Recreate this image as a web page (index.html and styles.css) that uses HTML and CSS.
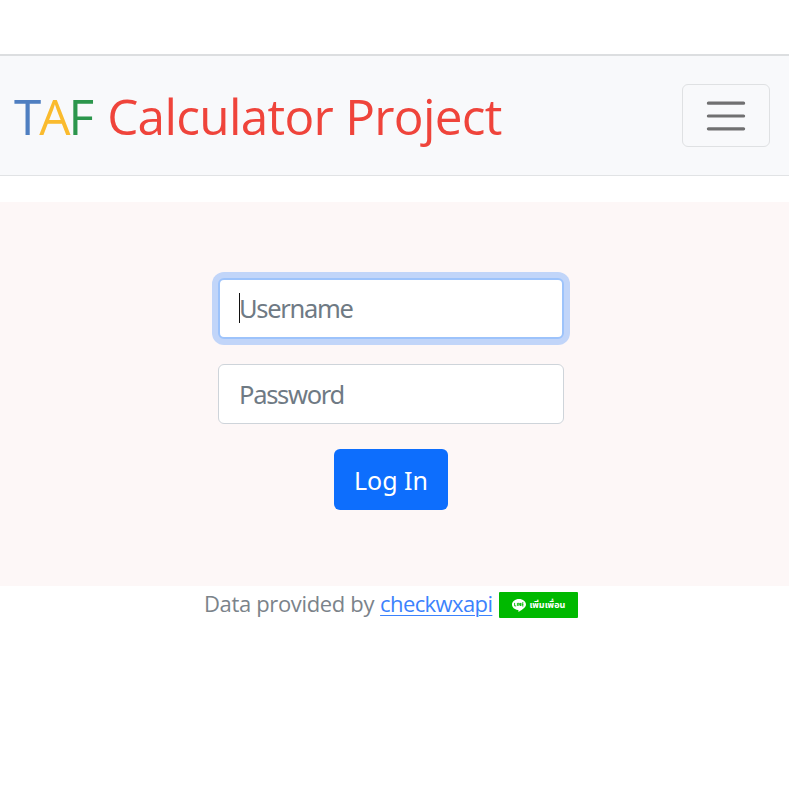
FILE: index.html
```html
<!DOCTYPE html>
<html lang="en">
<head>
<meta charset="utf-8">
<title>TAF Calculator Project</title>
<link rel="stylesheet" href="styles.css">
</head>
<body>
<div class="page">
  <header class="navbar">
    <a class="brand"><span class="initials"><span class="blue">T</span><span class="yellow">A</span><span class="green">F</span></span>Calculator Project</a>
    <button class="toggler" type="button" aria-label="Menu">
      <svg width="48" height="48" viewBox="0 0 30 30"><path stroke="#000" stroke-opacity=".55" stroke-linecap="round" stroke-width="2" d="M4 7h22M4 15h22M4 23h22"/></svg>
    </button>
  </header>
  <main class="login">
    <form class="form">
      <div class="field focused"><input type="text" placeholder="Username"><span class="caret"></span></div>
      <div class="field"><input class="password" type="password" placeholder="Password"></div>
      <button class="submit" type="button"><span>Log In</span></button>
    </form>
  </main>
  <footer class="footer">
    <span class="credit">Data provided by</span>
    <a class="link">checkwxapi</a>
    <a class="line">
      <svg width="14" height="13" viewBox="0 0 14 13"><path fill="#fff" d="M7 0C3.1 0 0 2.5 0 5.6c0 2.8 2.5 5.1 5.9 5.5.8.1.7.6.5 1.8 2-.8 7.6-4 7.6-7.3C14 2.5 10.900 0 7 0z"/><path fill="none" stroke="#00b900" stroke-width=".9" d="M2.600 3.900v3h1.600M5.400 3.900v3M6.800 6.900v-3l1.700 3v-3M11.500 3.900H10v3h1.500M10 5.400h1.500"/></svg>
      <span>เพิ่มเพื่อน</span>
    </a>
  </footer>
</div>
</body>
</html>
```
FILE: styles.css
```css
* { box-sizing: border-box; }
body { margin: 0; background: #fff; font-family: "Open Sans", "Noto Sans", sans-serif; }
.page { width: 789px; padding-top: 54px; }
.navbar {
  height: 122px;
  display: flex;
  align-items: center;
  justify-content: space-between;
  padding: 0 19px 0 14px;
  background: #f8f9fb;
  border-top: 2px solid #dcdee0;
  border-bottom: 1px solid #e1e3e5;
}
.brand { font-size: 49.5px; line-height: 68px; color: #ef443b; letter-spacing: -.7px; white-space: nowrap; }
.initials { margin-right: 15px; letter-spacing: -2px; }
.blue { color: #4f7fc1; }
.yellow { color: #fabb2e; }
.green { color: #2b964c; }
.toggler {
  width: 88px;
  height: 63px;
  padding: 0;
  display: flex;
  align-items: center;
  justify-content: center;
  background: none;
  border: 1px solid #dfe1e3;
  border-radius: 6px;
}
.login { margin-top: 26px; height: 384px; padding-top: 76px; background: #fdf7f7; }
.form { width: 346px; margin-left: 218px; display: flex; flex-direction: column; align-items: center; gap: 25px; }
.field { position: relative; width: 346px; height: 60px; border: 1px solid #ced4da; border-radius: 6px; background: #fff; }
.focused { height: 61px; border: 2px solid #9dc3fb; box-shadow: 0 0 0 6px #c1d5f9; }
.field input {
  display: block;
  width: 100%;
  height: 100%;
  padding: 0 18px 1px 19px;
  border: 0;
  outline: 0;
  background: transparent;
  font: 25.5px "Noto Sans", sans-serif;
  letter-spacing: -1.300px;
}
.field .password { padding: 0 19px 0 20px; letter-spacing: -1.300px; }
.field input::placeholder { color: #6f7a84; opacity: 1; }
.caret { position: absolute; left: 19px; top: 13px; width: 1px; height: 30px; background: #111; }
.submit {
  width: 114px;
  height: 61px;
  padding: 0;
  border: 0;
  border-radius: 6px;
  background: #0d6efd;
  color: #fff;
  font: 25px "Noto Sans", sans-serif;
}
.footer { display: flex; align-items: center; height: 38px; padding-left: 204px; font-size: 22px; white-space: nowrap; }
.credit, .link { position: relative; top: -2px; }
.credit { color: #7b838a; letter-spacing: -.35px; }
.link { margin-left: 6px; color: #3b82fd; letter-spacing: -.6px; text-decoration: underline #3b82fd 1px; text-underline-offset: 3px; }
.line {
  display: flex;
  align-items: center;
  gap: 3px;
  width: 79px;
  height: 26px;
  margin-left: 7px;
  padding-left: 13px;
  border-radius: 1px;
  background: #00b900;
  color: #fff;
  font: bold 9px "Noto Sans Thai", "Noto Sans", sans-serif;
}
```
